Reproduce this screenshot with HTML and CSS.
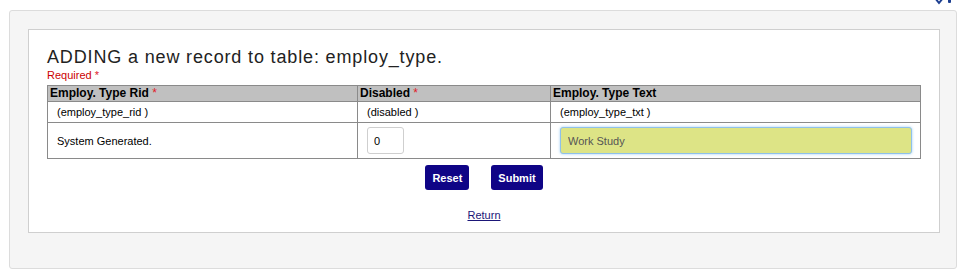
FILE: index.html
```html
<!DOCTYPE html>
<html lang="en">

<head>
    <meta charset="UTF-8">
    <meta name="viewport" content="width=device-width, initial-scale=1.0">
    <title>Add employ_type</title>
    <link rel="stylesheet" href="styles.css">
</head>

<body>
    <div class="top-bar">
        <svg class="top-icon" width="22" height="10" viewBox="0 0 22 10">
            <path d="M3 -2 L7 3 L11 -2" fill="none" stroke="#1d3f91" stroke-width="2" />
            <rect x="16" y="-3" width="3" height="6" rx="1" fill="#1d3f91" />
        </svg>
    </div>

    <div class="panel">
        <div class="form-box">
            <h2 class="form-title">ADDING a new record to table: employ_type.</h2>
            <div class="required-note">Required <span class="req">*</span></div>

            <form>
                <table class="record-table">
                    <colgroup>
                        <col class="col-rid">
                        <col class="col-disabled">
                        <col class="col-text">
                    </colgroup>
                    <tr class="head-row">
                        <th>Employ. Type Rid <span class="req">*</span></th>
                        <th>Disabled <span class="req">*</span></th>
                        <th>Employ. Type Text</th>
                    </tr>
                    <tr class="name-row">
                        <td>(employ_type_rid )</td>
                        <td>(disabled )</td>
                        <td>(employ_type_txt )</td>
                    </tr>
                    <tr class="value-row">
                        <td>System Generated.</td>
                        <td><input type="text" class="small-input" name="disabled" value="0"></td>
                        <td><input type="text" class="wide-input" name="employ_type_txt" value="Work Study"></td>
                    </tr>
                </table>

                <div class="button-group">
                    <button type="reset">Reset</button>
                    <button type="submit">Submit</button>
                </div>
            </form>

            <div class="return-row">
                <a href="#" class="return-link">Return</a>
            </div>
        </div>
    </div>
</body>

</html>
```

FILE: styles.css
```css
body {
    font-family: "Liberation Sans", Arial, sans-serif;
    margin: 0;
    padding: 0;
    background-color: #fff;
    color: #000;
}

.top-bar {
    height: 10px;
    display: flex;
    justify-content: flex-end;
    padding-right: 12px;
    overflow: hidden;
}

.top-icon {
    display: block;
}

.panel {
    margin: 0 9px;
    background-color: #f5f5f5;
    border: 1px solid #dcdcdc;
    border-radius: 3px;
    padding: 18px 16px 35px 18px;
}

.form-box {
    background-color: #fff;
    border: 1px solid #cfcfcf;
    padding: 17px 18px 10px 18px;
}

.form-title {
    margin: 0;
    font-family: "Liberation Sans", Arial, sans-serif;
    font-weight: normal;
    font-size: 18px;
    line-height: 21px;
    letter-spacing: 0.85px;
    color: #222;
}

.required-note {
    font-size: 11px;
    line-height: 14px;
    color: #cc0000;
    margin-bottom: 3px;
}

.req {
    color: #e0202a;
}

.record-table {
    width: 874px;
    border-collapse: collapse;
    table-layout: fixed;
    font-size: 11px;
}

.col-rid {
    width: 310px;
}

.col-disabled {
    width: 193px;
}

.record-table th,
.record-table td {
    border: 1px solid #8a8a8a;
    text-align: left;
}

.head-row th {
    background-color: #c0c0c0;
    font-size: 12px;
    font-weight: bold;
    line-height: 15px;
    padding: 0 2px;
}

.head-row th .req {
    font-weight: normal;
}

.name-row td {
    height: 20px;
    padding: 0 9px;
}

.value-row td {
    height: 35px;
    padding: 0 9px;
}

.small-input,
.wide-input {
    display: block;
    box-sizing: border-box;
    height: 27px;
    font-family: "Liberation Sans", Arial, sans-serif;
    font-size: 11px;
    border-radius: 3px;
    margin: 0;
}

.small-input {
    width: 37px;
    border: 1px solid #cfcfcf;
    padding: 0 6px;
    color: #000;
    background: #fff;
}

.wide-input {
    width: 352px;
    border: 1px solid #8fc1ea;
    box-shadow: 0 0 3px #9fcdf2;
    background-color: #dde486;
    color: #555;
    padding: 0 7px;
    outline: none;
}

.button-group {
    display: flex;
    justify-content: center;
    gap: 22px;
    width: 874px;
    margin-top: 6px;
}

.button-group button {
    height: 25px;
    padding: 0 7px;
    background-color: #0f0486;
    color: #fff;
    border: none;
    border-radius: 3px;
    font-family: "Liberation Sans", Arial, sans-serif;
    font-size: 11px;
    font-weight: bold;
    cursor: pointer;
}

.return-row {
    width: 874px;
    text-align: center;
    margin-top: 17px;
    line-height: 14px;
}

.return-link {
    font-size: 11px;
    color: #1b1678;
    text-decoration: underline;
}
```
